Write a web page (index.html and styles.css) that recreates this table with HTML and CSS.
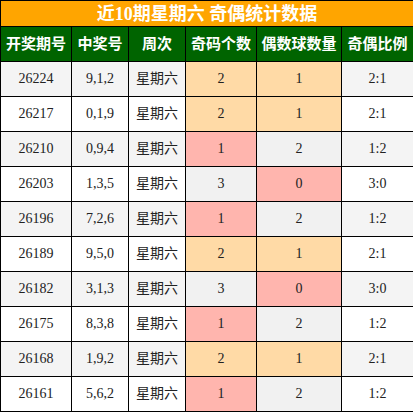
FILE: index.html
```html
<!DOCTYPE html>
<html lang="zh">
<head>
  <meta charset="UTF-8">
  <title>近10期星期六 奇偶统计数据</title>
  <link rel="stylesheet" href="styles.css">
</head>
<body>
  <table class="stats">
    <colgroup>
      <col class="c1">
      <col class="c2">
      <col class="c3">
      <col class="c4">
      <col class="c5">
      <col class="c6">
    </colgroup>
    <tr>
      <th class="title" colspan="6">近10期星期六 奇偶统计数据</th>
    </tr>
    <tr class="head">
      <th>开奖期号</th>
      <th>中奖号</th>
      <th>周次</th>
      <th>奇码个数</th>
      <th>偶数球数量</th>
      <th>奇偶比例</th>
    </tr>
    <tr class="odd"><td>26224</td><td>9,1,2</td><td>星期六</td><td class="peach">2</td><td class="peach">1</td><td>2:1</td></tr>
    <tr><td>26217</td><td>0,1,9</td><td>星期六</td><td class="peach">2</td><td class="peach">1</td><td>2:1</td></tr>
    <tr class="odd"><td>26210</td><td>0,9,4</td><td>星期六</td><td class="pink">1</td><td class="grey">2</td><td>1:2</td></tr>
    <tr><td>26203</td><td>1,3,5</td><td>星期六</td><td class="grey">3</td><td class="pink">0</td><td>3:0</td></tr>
    <tr class="odd"><td>26196</td><td>7,2,6</td><td>星期六</td><td class="pink">1</td><td class="grey">2</td><td>1:2</td></tr>
    <tr><td>26189</td><td>9,5,0</td><td>星期六</td><td class="peach">2</td><td class="peach">1</td><td>2:1</td></tr>
    <tr class="odd"><td>26182</td><td>3,1,3</td><td>星期六</td><td class="grey">3</td><td class="pink">0</td><td>3:0</td></tr>
    <tr><td>26175</td><td>8,3,8</td><td>星期六</td><td class="pink">1</td><td class="grey">2</td><td>1:2</td></tr>
    <tr class="odd"><td>26168</td><td>1,9,2</td><td>星期六</td><td class="peach">2</td><td class="peach">1</td><td>2:1</td></tr>
    <tr><td>26161</td><td>5,6,2</td><td>星期六</td><td class="pink">1</td><td class="grey">2</td><td>1:2</td></tr>
  </table>
</body>
</html>
```

FILE: styles.css
```css
body {
  margin: 0;
  padding: 0;
  background-color: #fff;
  font-family: 'Liberation Serif', 'Noto Sans CJK SC', serif;
}
.stats {
  width: 413px;
  border-collapse: collapse;
  border: 1px solid #000;
  table-layout: fixed;
}
.stats th,
.stats td {
  border: 1px solid #000;
  padding: 0;
  text-align: center;
  white-space: nowrap;
}
.c1 { width: 71px; }
.c2 { width: 57px; }
.c3 { width: 57px; }
.c4 { width: 71px; }
.c5 { width: 85px; }
.c6 { width: 72px; }
.title {
  height: 25px;
  background-color: #ffa500;
  color: #fff;
  font-size: 18px;
  font-weight: bold;
  line-height: 24px;
}
.head th {
  height: 34px;
  background-color: #006400;
  color: #fff;
  font-size: 15px;
  font-weight: bold;
  line-height: 20px;
}
.stats td {
  height: 34px;
  font-size: 14px;
  line-height: 20px;
  color: #222;
  background-color: #fff;
}
.odd td {
  background-color: #f4f4f4;
}
.stats td.peach {
  background-color: #ffdaa6;
}
.stats td.pink {
  background-color: #ffb5ae;
}
.stats td.grey {
  background-color: #f1f1f1;
}
```
